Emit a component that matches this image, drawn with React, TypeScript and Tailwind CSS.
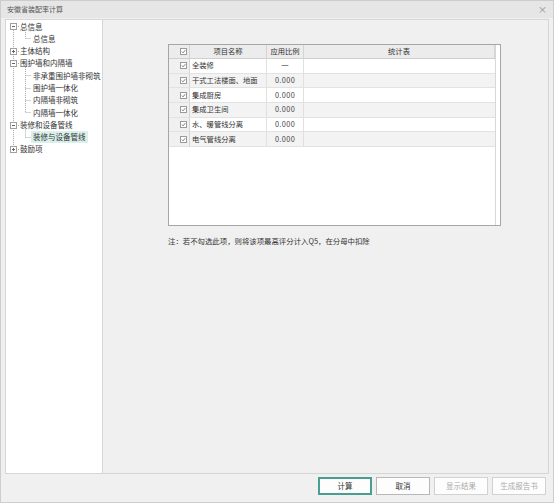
import React from 'react';

const FONT = "font-['Microsoft_YaHei','Noto_Sans_CJK_SC',sans-serif]";

type TreeItem = { label: string; level: 0 | 1; box?: '-' | '+'; selected?: boolean };

const TREE: TreeItem[] = [
  { label: '总信息', level: 0, box: '-' },
  { label: '总信息', level: 1 },
  { label: '主体结构', level: 0, box: '+' },
  { label: '围护墙和内隔墙', level: 0, box: '-' },
  { label: '非承重围护墙非砌筑', level: 1 },
  { label: '围护墙一体化', level: 1 },
  { label: '内隔墙非砌筑', level: 1 },
  { label: '内隔墙一体化', level: 1 },
  { label: '装修和设备管线', level: 0, box: '-' },
  { label: '装修与设备管线', level: 1, selected: true },
  { label: '鼓励项', level: 0, box: '+' },
];

const ROWS = [
  ['全装修', '一'],
  ['干式工法楼面、地面', '0.000'],
  ['集成厨房', '0.000'],
  ['集成卫生间', '0.000'],
  ['水、暖管线分离', '0.000'],
  ['电气管线分离', '0.000'],
];

const ROW_H = 12.3;
const cy = (i: number) => 6.15 + ROW_H * i;

// parent row -> child rows
const GROUPS: [number, number[]][] = [
  [0, [1]],
  [3, [4, 5, 6, 7]],
  [8, [9]],
];

const TreeLines: React.FC = () => {
  const roots = TREE.map((t, i) => (t.level === 0 ? i : -1)).filter((i) => i >= 0);
  const dot = { stroke: '#a8a8a8', strokeWidth: 1, strokeDasharray: '1 1' };
  return (
    <svg className="pointer-events-none absolute left-0 top-0" width={96} height={160}>
      <line x1={7.5} y1={cy(0)} x2={7.5} y2={cy(10)} {...dot} />
      {roots.map((i) => (
        <line key={'h' + i} x1={10} y1={Math.round(cy(i)) + 0.5} x2={13} y2={Math.round(cy(i)) + 0.5} {...dot} />
      ))}
      {GROUPS.map(([p, kids]) => (
        <g key={'g' + p}>
          <line x1={19.5} y1={cy(p) + 4} x2={19.5} y2={Math.round(cy(kids[kids.length - 1])) + 0.5} {...dot} />
          {kids.map((k) => (
            <line key={k} x1={19.5} y1={Math.round(cy(k)) + 0.5} x2={25} y2={Math.round(cy(k)) + 0.5} {...dot} />
          ))}
        </g>
      ))}
      {roots.map((i) => {
        const y = Math.round(cy(i)) + 0.5;
        return (
          <g key={'b' + i}>
            <rect x={4.5} y={y - 3} width={6} height={6} fill="#fff" stroke="#a0a0a0" strokeWidth={1} />
            <line x1={6} y1={y} x2={9} y2={y} stroke="#666" strokeWidth={1} />
            {TREE[i].box === '+' && <line x1={7.5} y1={y - 1.5} x2={7.5} y2={y + 1.5} stroke="#666" strokeWidth={1} />}
          </g>
        );
      })}
    </svg>
  );
};

const Check: React.FC = () => (
  <svg width={7} height={7} viewBox="0 0 7 7">
    <rect x={0.5} y={0.5} width={6} height={6} fill="#fff" stroke="#9a9a9a" />
    <path d="M1.8 3.6 L3 4.8 L5.3 2.2" fill="none" stroke="#555" strokeWidth={0.8} />
  </svg>
);

const Btn: React.FC<{ label: string; primary?: boolean; disabled?: boolean }> = ({ label, primary, disabled }) => (
  <button
    className={`flex h-[18px] w-[54px] items-center justify-center bg-[#fdfdfd] text-[7.5px] ${
      primary
        ? 'border-2 border-[#4a9e91] text-[#333]'
        : disabled
          ? 'border border-[#d2d2d2] text-[#aaaaaa]'
          : 'border border-[#b8b8b8] text-[#333]'
    }`}
  >
    {label}
  </button>
);

export default function App() {
  return (
    <div className={`flex h-[503px] w-[554px] flex-col border border-[#cdcdcd] bg-[#f0f0f0] ${FONT}`}>
      {/* title bar */}
      <div className="flex h-[17px] shrink-0 items-center justify-between bg-[#e6e6e6] pl-[6px] pr-[6px]">
        <span className="text-[7px] text-[#555]">安徽省装配率计算</span>
        <span className="text-[9px] leading-none text-[#8a8a8a]">×</span>
      </div>

      {/* main */}
      <div className="mx-[4px] mt-[1px] flex h-[455px] shrink-0 border border-[#d6d6d6]">
        <div className="relative w-[97px] shrink-0 border-r border-[#d6d6d6] bg-white">
          <TreeLines />
          <div className="flex flex-col">
            {TREE.map((t, i) => (
              <div key={i} className="flex h-[12.3px] items-center">
                <span
                  className={`flex h-[12px] items-center whitespace-nowrap px-[2px] text-[7.5px] text-[#333] ${
                    t.level === 0 ? 'ml-[12px]' : 'ml-[25px]'
                  } ${t.selected ? 'bg-[#daf0eb]' : ''}`}
                >
                  {t.label}
                </span>
              </div>
            ))}
          </div>
        </div>

        <div className="flex flex-1 flex-col pl-[65px] pt-[24px]">
          <div className="flex h-[182px] w-[333px] border border-[#a6a6a6] bg-white">
            <div className="flex flex-col">
              <div className="flex h-[14px] shrink-0 border-b border-[#cfcfcf] bg-[#ececec] text-[7.3px] text-[#333]">
                <div className="flex w-[21px] items-center justify-end border-r border-[#d4d4d4] pr-[2px]">
                  <Check />
                </div>
                <div className="flex w-[77px] items-center justify-center border-r border-[#d4d4d4]">项目名称</div>
                <div className="flex w-[37px] items-center justify-center border-r border-[#d4d4d4]">应用比例</div>
                <div className="flex w-[191px] items-center justify-center border-r border-[#d4d4d4]">统计表</div>
              </div>
              {ROWS.map(([name, ratio], i) => (
                <div
                  key={name}
                  className={`flex h-[14.7px] w-[326px] shrink-0 border-b border-[#e2e2e2] text-[7.3px] text-[#333] ${
                    i % 2 === 1 ? 'bg-[#f3f3f3]' : 'bg-white'
                  }`}
                >
                  <div className="flex w-[21px] items-center justify-end border-r border-[#d4d4d4] bg-[#f0f0f0] pr-[2px]">
                    <Check />
                  </div>
                  <div className="flex w-[77px] items-center border-r border-[#e0e0e0] pl-[2px]">{name}</div>
                  <div className="flex w-[37px] items-center justify-center border-r border-[#e0e0e0] tracking-[0.4px] text-[#444]">
                    {ratio}
                  </div>
                  <div className="w-[191px]" />
                </div>
              ))}
            </div>
            <div className="flex-1 border-l border-[#d8d8d8]" />
          </div>
          <div className="mt-[9px] text-[7.4px] text-[#333]">注：若不勾选此项，则将该项最高评分计入Q5，在分母中扣除</div>
        </div>
      </div>

      {/* buttons */}
      <div className="flex flex-1 items-start justify-end gap-[4px] pr-[7px] pt-[3px]">
        <Btn label="计算" primary />
        <Btn label="取消" />
        <Btn label="显示结果" disabled />
        <Btn label="生成报告书" disabled />
      </div>
    </div>
  );
}
